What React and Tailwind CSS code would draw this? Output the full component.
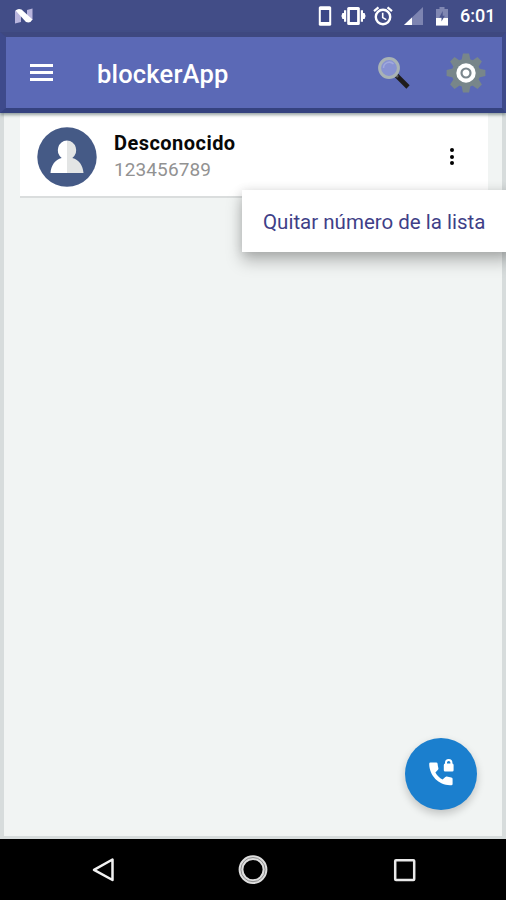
import React from "react";

function StatusBar() {
  return (
    <div className="flex h-8 shrink-0 items-center bg-[#424d87] pl-[14px] pr-[10px]">
      <svg width="20" height="16" viewBox="0 0 20 16">
        <path d="M1 2.5 L7 5 V14 L1 15.5Z" fill="#b9b5dd" />
        <path d="M13 2 L18.5 0.5 V12 L13 11Z" fill="#b9b5dd" />
        <path d="M1.5 2.5 Q4 0 7.5 1.5 L18.5 11.5 Q16.5 15.5 12 14Z" fill="#fff" />
      </svg>
      <div className="ml-auto flex items-center">
        <svg width="14" height="22" viewBox="0 0 14 22">
          <rect x="0.8" y="1.2" width="12.4" height="19.6" rx="1.6" fill="#fff" />
          <rect x="2.8" y="5" width="8.4" height="12" fill="#3b4787" />
        </svg>
        <svg className="ml-[9px]" width="25" height="20" viewBox="0 0 25 20">
          <rect x="6.2" y="1" width="12.6" height="18" rx="1.5" fill="#fff" />
          <rect x="8.9" y="4" width="7.2" height="12" fill="#3b4787" />
          <path d="M5.2 4.2v11.6H3V13H1.4L0.400 10 1.400 7H3V4.2ZM19.800 4.2v11.6H22V13H23.600L24.600 10 23.600 7H22V4.2Z" fill="#fff" />
        </svg>
        <svg className="ml-[7px]" width="20" height="20" viewBox="0 0 20 20" fill="none" stroke="#fff">
          <circle cx="10" cy="11" r="7.2" strokeWidth="2.4" />
          <path d="M1 5.2 L5.5 1.4M19 5.2 L14.5 1.4" strokeWidth="2.2" />
          <path d="M9.7 6.8v4.8l3.6 2" strokeWidth="1.6" />
        </svg>
        <svg className="ml-[10px]" width="20" height="18" viewBox="0 0 20 18">
          <path d="M20 0V18H1Z" fill="#7d84b1" />
          <path d="M9 10.5V18H1Z" fill="#fff" />
        </svg>
        <svg className="ml-3" width="14" height="20" viewBox="0 0 14 20">
          <path d="M4.5 1h5v2H13v16.5H1V3h3.5Z" fill="#8087b2" />
          <path d="M1 12h12v7.500H1Z" fill="#fff" />
          <path d="M7.700 5 L4.300 11.500H6.500V15.500L9.800 9.800H7.700Z" fill="#4b568f" />
        </svg>
        <span className="ml-[11px] w-9 whitespace-nowrap text-[18px] font-medium leading-5 text-white">6:01</span>
      </div>
    </div>
  );
}

function SearchIcon() {
  return (
    <svg width="34" height="34" viewBox="0 0 34 34">
      <path d="M19.5 19.5 L31 31" stroke="#1f1c1c" strokeWidth="4.6" />
      <path d="M17.5 17.5 L21 21" stroke="#5a5c5a" strokeWidth="2.5" />
      <circle cx="12" cy="12" r="9.4" fill="#8792d2" stroke="#a9b3b5" strokeWidth="3" />
      <path d="M6.5 12a5.8 5.8 0 0 1 10-4" stroke="#a0a9dd" strokeWidth="1.5" fill="none" />
    </svg>
  );
}

function GearIcon() {
  return (
    <svg width="40" height="40" viewBox="-20 -20 40 40">
      <g fill="#78868a">
        <circle r="14.2" />
        {[0, 45, 90, 135, 180, 225, 270, 315].map((a) => (
          <path key={a} d="M-4.4 -13 L-3.1 -19.4 H3.1 L4.4 -13Z" transform={`rotate(${a})`} />
        ))}
      </g>
      <circle r="9.7" fill="#fff" />
      <circle r="4.5" fill="#fff" stroke="#7b878d" strokeWidth="2.2" />
    </svg>
  );
}

function Toolbar() {
  return (
    <header className="relative z-10 h-[81px] shrink-0 border-b-[5px] border-l-[6px] border-r-4 border-t-[5px] border-b-[#35427f] border-l-[#3e4a8b] border-r-[#3e4a8b] border-t-[#3e4880] bg-[#5b69b6] shadow-[0_2px_3px_rgba(80,100,100,0.6)]">
      <div className="flex h-full items-center pl-6 pr-4">
        <div className="flex w-[23px] flex-col gap-1">
          <span className="h-[3px] bg-white" />
          <span className="h-[3px] bg-white" />
          <span className="h-[3px] bg-white" />
        </div>
        <h1 className="ml-[44px] whitespace-nowrap pt-[2px] text-[25.5px] font-medium leading-8 tracking-[0.18px] text-white">blockerApp</h1>
        <div className="ml-auto flex items-center gap-[35px]">
          <SearchIcon />
          <GearIcon />
        </div>
      </div>
    </header>
  );
}

function ContactCard() {
  return (
    <div className="relative ml-4 mr-[14px] flex h-[85px] items-center border-b-2 border-[#dadddd] bg-white pl-[17px] pr-8 pt-1">
      <svg width="60" height="60" viewBox="0 0 60 60">
        <circle cx="30" cy="30" r="29.7" fill="#455a86" />
        <path d="M30 13.5a9.7 9.7 0 0 0-5.300 17.400C18 32.500 14 38.500 13.500 46H30Z" fill="#fff" />
        <path d="M30 13.5a9.7 9.7 0 0 1 5.300 17.400C42 32.500 46 38.500 46.500 46H30Z" fill="#e3e5e5" />
      </svg>
      <div className="ml-[17px] whitespace-nowrap pb-px">
        <div className="text-[20px] font-bold leading-[26px] tracking-[0.46px] text-[#080808]">Desconocido</div>
        <div className="text-[19px] leading-[27px] tracking-[0.1px] text-[#929292]">123456789</div>
      </div>
      <div className="ml-auto flex w-2 flex-col items-center gap-[2.5px]">
        <span className="size-1 rounded-full bg-black" />
        <span className="size-1 rounded-full bg-black" />
        <span className="size-1 rounded-full bg-black" />
      </div>
      <div className="absolute left-[222px] top-[77px] flex h-[62px] w-[270px] items-center whitespace-nowrap bg-white pl-[21px] pt-[2px] text-[20.5px] text-[#3f3f88] shadow-[0_9px_15px_rgba(0,0,0,0.25),0_1px_10px_rgba(0,0,0,0.12)]">
        Quitar número de la lista
      </div>
    </div>
  );
}

function NavBar() {
  return (
    <nav className="flex h-[61px] shrink-0 items-center bg-black pl-[91px] pr-[89px]">
      <svg width="24" height="26" viewBox="0 0 24 26">
        <path d="M21.5 2.5V23L3 12.8Z" fill="none" stroke="#f1f1f1" strokeWidth="2.5" strokeLinejoin="round" />
      </svg>
      <svg className="ml-[123px]" width="30" height="30" viewBox="0 0 30 30" fill="none">
        <circle cx="15" cy="14.600" r="12" stroke="#dedede" strokeWidth="4.8" />
        <circle cx="15" cy="14.600" r="12.1" stroke="#777" strokeWidth="0.8" />
      </svg>
      <svg className="ml-auto" width="24" height="24" viewBox="0 0 24 24">
        <rect x="2.2" y="2.2" width="19" height="19.8" rx="0.8" fill="none" stroke="#e9e9e9" strokeWidth="2.5" />
      </svg>
    </nav>
  );
}

export default function App() {
  return (
    <div className="flex h-[900px] w-[506px] flex-col overflow-hidden bg-[#d8dddd] font-['Roboto',sans-serif]">
      <StatusBar />
      <Toolbar />
      <main className="relative h-[726px] shrink-0 border-b-[3px] border-l-4 border-r-4 border-[#d7dcdc] bg-[#f1f4f3]">
        <ContactCard />
        <button
          aria-label="Bloquear número"
          className="absolute bottom-[26px] right-[25px] flex size-[72px] items-center justify-center rounded-full bg-[#1b7fce] shadow-[0_4px_8px_rgba(0,0,0,0.2)]"
        >
          <svg width="32" height="32" viewBox="0 0 32 32" fill="#fff">
            <path d="M5.500 4.500h5.700q1.300 0 1.400 1.300c.1 1.600.4 3.100.8 4.500q.2.900-.4 1.500l-2.600 2.700c1.800 3.200 4 5.300 7.200 7.100l2.700-2.600q.6-.6 1.500-.4c1.400.4 2.900.7 4.500.8q1.300.1 1.300 1.400v5.200q0 1.200-1.300 1.200C14.500 28 4.200 18 4.200 5.800q0-1.300 1.300-1.300Z" />
            <path d="M20 5.500V4.600a3.700 3.700 0 0 1 7.400 0V5.500q1.200.2 1.200 1.500V12.200q0 1.300-1.300 1.300h-7.200q-1.300 0-1.300-1.300V7q0-1.300 1.200-1.500Zm2 0h3.400V4.600a1.700 1.700 0 0 0-3.400 0Z" fillRule="evenodd" />
          </svg>
        </button>
      </main>
      <NavBar />
    </div>
  );
}
